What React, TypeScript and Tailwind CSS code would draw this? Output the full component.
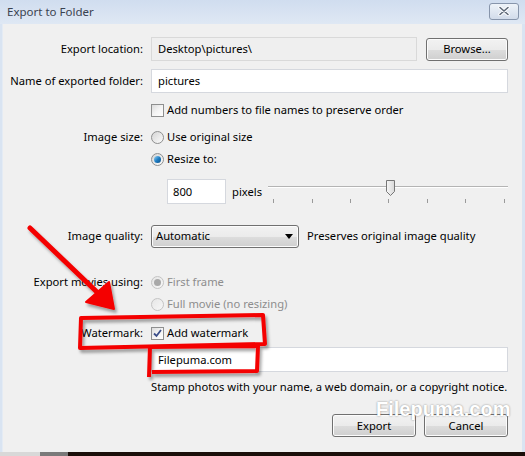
import { ReactNode } from 'react'

const font = { fontFamily: '"Noto Sans", "Open Sans", sans-serif' }

function Label({ children }: { children?: ReactNode }) {
  return <div className="w-[142px] shrink-0 text-right pr-[2px] whitespace-nowrap">{children}</div>
}

function Row({ label, className = '', children }: { label?: string; className?: string; children: ReactNode }) {
  return (
    <div className={`flex items-center ${className}`}>
      <Label>{label}</Label>
      <div className="ml-[6px] flex-1 flex items-center min-w-0">{children}</div>
    </div>
  )
}

function Checkbox({ checked = false }: { checked?: boolean }) {
  return (
    <span className="w-[13px] h-[13px] shrink-0 border border-[#8e8f8f] bg-gradient-to-br from-[#dcdcdc] via-[#f4f4f4] to-[#ffffff] flex items-center justify-center">
      {checked && (
        <svg width="9" height="9" viewBox="0 0 9 9">
          <path d="M1 4.5 L3.5 7 L8 1" fill="none" stroke="#3b4e89" strokeWidth="1.8" />
        </svg>
      )}
    </span>
  )
}

function Radio({ checked = false, disabled = false }: { checked?: boolean; disabled?: boolean }) {
  return (
    <span
      className={`w-[13px] h-[13px] shrink-0 rounded-full border flex items-center justify-center bg-gradient-to-br ${
        disabled ? 'border-[#c4c4c4] from-[#e6e6e6] to-[#f7f7f7]' : 'border-[#8e8f8f] from-[#d5d5d5] to-[#fcfcfc]'
      }`}
    >
      {checked && (
        <span
          className={`w-[7px] h-[7px] rounded-full ${
            disabled ? 'bg-[#a9a9a9]' : 'bg-gradient-to-br from-[#8fd3f5] via-[#1f7fc4] to-[#0b4e87]'
          }`}
        />
      )}
    </span>
  )
}

function Button({ children, className = '' }: { children: ReactNode; className?: string }) {
  return (
    <div
      className={`h-[23px] rounded-[3px] border border-[#707070] flex items-center bg-[linear-gradient(#f2f2f2_0%,#ebebeb_50%,#dddddd_51%,#cfcfcf_100%)] shadow-[inset_0_0_0_1px_#fcfcfc] ${className}`}
    >
      {children}
    </div>
  )
}

function Slider() {
  const ticks = [273, 312, 350, 388, 427, 465, 504]
  return (
    <div className="relative w-[240px] h-[25px] ml-auto">
      <div className="absolute left-0 right-0 top-[7px] h-[1px] bg-[#b4b4b4]" />
      <div className="absolute left-0 right-0 top-[8px] h-[1px] bg-white" />
      {ticks.map(x => (
        <div key={x} className="absolute top-[20px] w-[1px] h-[4px] bg-[#9a9a9a]" style={{ left: x - 268 }} />
      ))}
      <svg className="absolute top-0" style={{ left: 117 }} width="11" height="18" viewBox="0 0 11 18">
        <defs>
          <linearGradient id="thumb" x1="0" x2="1">
            <stop offset="0" stopColor="#f7f7f7" />
            <stop offset="1" stopColor="#d8d8d8" />
          </linearGradient>
        </defs>
        <path d="M1.5 1.5 H9.5 V12.5 L5.5 16.5 L1.5 12.5 Z" fill="url(#thumb)" stroke="#777" strokeLinejoin="round" />
      </svg>
    </div>
  )
}

function Annotations() {
  return (
    <svg className="absolute inset-0 pointer-events-none" width="525" height="456" viewBox="0 0 525 456">
      <defs>
        <filter id="drop" x="-20%" y="-20%" width="140%" height="140%">
          <feDropShadow dx="2" dy="3" stdDeviation="1.6" floodColor="#000" floodOpacity="0.35" />
        </filter>
      </defs>
      <g filter="url(#drop)" fill="none" stroke="#f40000" strokeLinejoin="round">
        <line x1="30" y1="228" x2="98" y2="293" strokeWidth="5" strokeLinecap="round" />
        <path d="M86 302 L109 282 L114 309 Z" fill="#f40000" strokeWidth="2" />
        <path d="M81 318 L263 315 L265 344 L80 348 Z" strokeWidth="4" />
        <path d="M149 347 L258 346 L257 371 L152 372 M150 346 L149 377" strokeWidth="4" />
      </g>
    </svg>
  )
}

export default function App() {
  return (
    <div className="relative w-[525px] h-[456px] overflow-hidden bg-[#1b0f0a] text-[11.2px] text-black leading-none" style={font}>
      <div className="h-[452px] flex flex-col bg-[#d9e4f2]">
        {/* title bar */}
        <div className="h-[24px] shrink-0 flex items-center justify-between pl-[7px] pr-[6px] bg-gradient-to-b from-[#d0ddef] to-[#dfe8f4]">
          <span className="text-[11.5px] text-[#3a4250]">Export to Folder</span>
          <div className="w-[30px] h-[17px] mt-[-2px] rounded-[3px] border border-[#8795ab] bg-gradient-to-b from-[#eef3f9] to-[#d2dcea] flex items-center justify-center">
            <svg width="12" height="10" viewBox="0 0 12 10">
              <path d="M2 1.5 L10 8.5 M10 1.5 L2 8.5" stroke="#fff" strokeWidth="3.4" strokeLinecap="round" />
              <path d="M2 1.5 L10 8.5 M10 1.5 L2 8.5" stroke="#5d6878" strokeWidth="1.6" strokeLinecap="round" />
            </svg>
          </div>
        </div>

        {/* dialog body */}
        <div className="flex-1 ml-[2px] mr-[3px] bg-[#f0f0f0] border-l border-[#e4ebf4] pt-[13px] pr-[14px]">
          <Row label="Export location:" className="h-[24px]">
            <div className="w-[266px] h-[24px] border border-[#d9d9d9] bg-[#efefef] flex items-center pl-[6px]">Desktop\pictures\</div>
            <Button className="ml-[9px] w-[82px] justify-center">Browse...</Button>
          </Row>

          <Row label="Name of exported folder:" className="h-[24px] mt-[8px]">
            <div className="flex-1 h-[24px] border border-[#d5d8de] bg-white flex items-center pl-[6px]">pictures</div>
          </Row>

          <Row className="h-[16px] mt-[9px]">
            <Checkbox />
            <span className="ml-[3px]">Add numbers to file names to preserve order</span>
          </Row>

          <Row label="Image size:" className="h-[18px] mt-[10px]">
            <Radio />
            <span className="ml-[3px]">Use original size</span>
          </Row>

          <Row className="h-[18px] mt-[4px]">
            <Radio checked />
            <span className="ml-[3px]">Resize to:</span>
          </Row>

          <Row className="h-[25px] mt-[11px]">
            <div className="ml-[16px] w-[59px] h-[25px] border border-[#d5d8de] bg-white flex items-center pl-[5px]">800</div>
            <span className="ml-[6px]">pixels</span>
            <Slider />
          </Row>

          <Row label="Image quality:" className="h-[22px] mt-[21px]">
            <Button className="w-[148px] justify-between px-[4px]">
              <span>Automatic</span>
              <svg width="8" height="5" viewBox="0 0 8 5" className="mr-[1px]">
                <path d="M0 0 H8 L4 5 Z" fill="#000" />
              </svg>
            </Button>
            <span className="ml-[8px]">Preserves original image quality</span>
          </Row>

          <Row label="Export movies using:" className="h-[18px] mt-[26px]">
            <Radio checked disabled />
            <span className="ml-[3px] text-[#8d8d8d]">First frame</span>
          </Row>

          <Row className="h-[18px] mt-[4px]">
            <Radio disabled />
            <span className="ml-[3px] text-[#8d8d8d]">Full movie (no resizing)</span>
          </Row>

          <Row label="Watermark:" className="h-[18px] mt-[11px]">
            <Checkbox checked />
            <span className="ml-[3px]">Add watermark</span>
          </Row>

          <Row className="h-[25px] mt-[5px]">
            <div className="flex-1 h-[25px] border border-[#d5d8de] bg-white flex items-center pl-[6px]">Filepuma.com</div>
          </Row>

          <Row className="h-[16px] mt-[7px]">
            <span className="whitespace-nowrap">Stamp photos with your name, a web domain, or a copyright notice.</span>
          </Row>

          <div className="flex justify-end gap-[8px] mt-[19px]">
            <Button className="w-[84px] justify-center">Export</Button>
            <Button className="w-[84px] justify-center">Cancel</Button>
          </div>
        </div>
      </div>

      {/* strip of desktop under the window */}
      <div className="absolute left-0 bottom-0 h-[4px] w-[68px] flex">
        <div className="w-[40px] bg-[#d8d8d8]" />
        <div className="w-[28px] bg-[#7a7a7a]" />
      </div>

      <Annotations />

      <div
        className="absolute left-[376px] top-[399px] text-[20px] leading-none font-bold text-white [text-shadow:0_0_2px_rgba(0,0,0,0.45)]"
        style={{ fontFamily: '"Liberation Sans", Arial, sans-serif' }}
      >
        Filepuma.com
      </div>
    </div>
  )
}
